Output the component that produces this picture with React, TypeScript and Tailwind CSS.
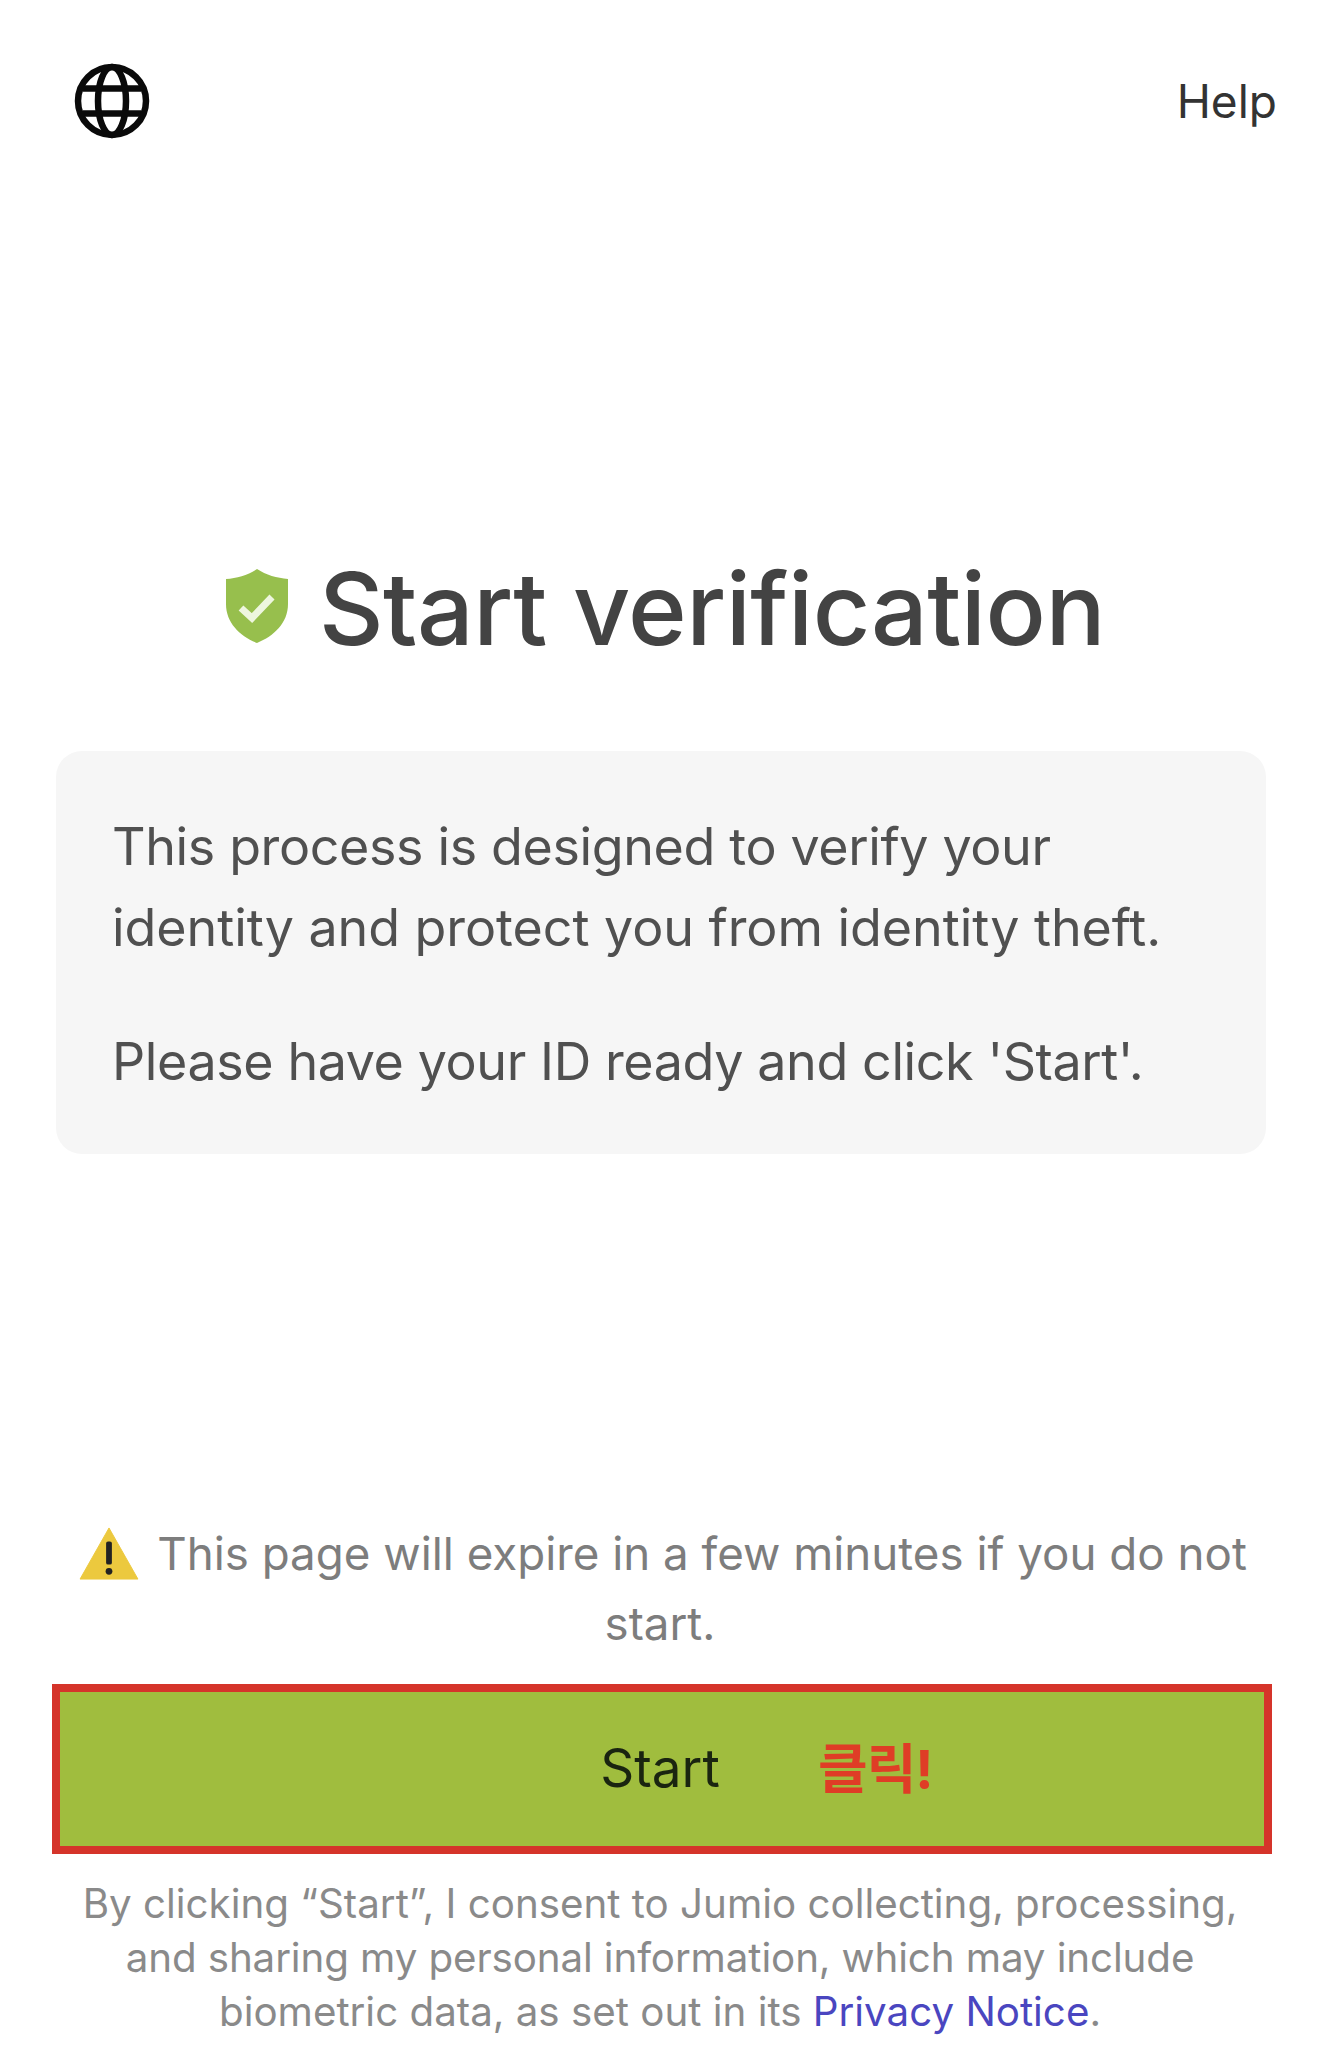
export default function App() {
  return (
    <div className="w-[1320px] h-[2069px] overflow-hidden bg-white flex flex-col font-['Inter','Noto_Sans_CJK_KR',sans-serif]">
      <header className="flex items-center justify-between pl-[72px] pr-[43px] pt-[62px] h-[140px]">
        <svg width="80" height="80" viewBox="0 0 80 80" fill="none" stroke="#0a0a0a" strokeWidth="6.5" aria-hidden="true">
          <circle cx="40" cy="40" r="34" />
          <ellipse cx="40" cy="40" rx="14" ry="34" />
          <path d="M11 27.5h58M11 52.5h58" />
        </svg>
        <span className="text-[46px] leading-[52px] text-[#333]">Help</span>
      </header>

      <div className="mt-[413px] flex items-center justify-center gap-[30px] pl-[10px]">
        <svg className="-translate-y-[3px]" width="64" height="76" viewBox="0 0 64 76" aria-hidden="true">
          <path d="M32 1 C41 7 52 10 63 11 V36 C63 55 49 68 32 75 C15 68 1 55 1 36 V11 C12 10 23 7 32 1Z" fill="#97bf4d" />
          <path d="M16 40 L27 50 L47 29" fill="none" stroke="#eef6df" strokeWidth="7" />
        </svg>
        <h1 className="text-[100px] leading-[112px] font-medium text-[#434343] tracking-[-0.5px]">Start verification</h1>
      </div>

      <section className="mt-[86px] mx-[56px] w-[1210px] h-[403px] rounded-[26px] bg-[#f6f6f6] pl-[56px] pt-[55px] text-[52px] leading-[81px] text-[#505050]">
        <p className="tracking-[-0.37px]">This process is designed to verify your</p>
        <p className="tracking-[-0.06px]">identity and protect you from identity theft.</p>
        <p className="mt-[53px] tracking-[-0.4px]">Please have your ID ready and click 'Start'.</p>
      </section>

      <div className="mt-[365px] text-center text-[45.7px] leading-[70px] text-[#7d7d7d]">
        <p className="flex items-center justify-center gap-[18px] pl-[6px]">
          <svg width="60" height="54" viewBox="0 0 62 56" aria-hidden="true">
            <path d="M31 1 L61 54 H1 Z" fill="#ecc93e" stroke="#ecc93e" strokeLinejoin="round" />
            <rect x="28" y="15" width="6" height="24" rx="2" fill="#222" />
            <circle cx="31" cy="46" r="3.5" fill="#222" />
          </svg>
          This page will expire in a few minutes if you do not
        </p>
        <p>start.</p>
      </div>

      <button className="relative mt-[25px] ml-[52px] w-[1220px] h-[170px] border-[8px] border-[#d5342a] bg-[#a0bd3e] text-[53px] text-[#1a2410] flex items-center justify-center">
        <span className="-translate-x-[2px]">Start</span>
        <span className="absolute left-[758px] top-1/2 -translate-y-1/2 text-[54px] font-bold text-[#df3d26] tracking-[-1px]">클릭!</span>
      </button>

      <footer className="mt-[23px] text-center text-[40.3px] leading-[54px] text-[#8a8a8a]">
        <p>By clicking “Start”, I consent to Jumio collecting, processing,</p>
        <p className="tracking-[-0.1px]">and sharing my personal information, which may include</p>
        <p>biometric data, as set out in its <span className="text-[#4a46c0]">Privacy Notice</span>.</p>
      </footer>
    </div>
  );
}
